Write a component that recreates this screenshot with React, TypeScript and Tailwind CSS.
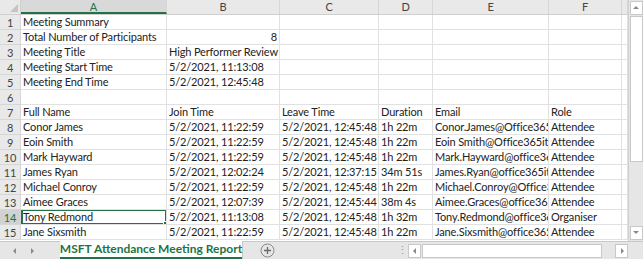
import React from 'react';

const cols = ['A', 'B', 'C', 'D', 'E', 'F', ''];
const widths = ['w-[146px]', 'w-[113px]', 'w-[99px]', 'w-[54px]', 'w-[116px]', 'w-[73px]', 'w-[6px]'];

type Row = { cells: string[]; right?: number[] };

const rows: Row[] = [
  { cells: ['Meeting Summary'] },
  { cells: ['Total Number of Participants', '8'], right: [1] },
  { cells: ['Meeting Title', 'High Performer Review'] },
  { cells: ['Meeting Start Time', '5/2/2021, 11:13:08'] },
  { cells: ['Meeting End Time', '5/2/2021, 12:45:48'] },
  { cells: [] },
  { cells: ['Full Name', 'Join Time', 'Leave Time', 'Duration', 'Email', 'Role'] },
  { cells: ['Conor James', '5/2/2021, 11:22:59', '5/2/2021, 12:45:48', '1h 22m', 'Conor.James@Office365itpros.com', 'Attendee'] },
  { cells: ['Eoin Smith', '5/2/2021, 11:22:59', '5/2/2021, 12:45:48', '1h 22m', 'Eoin Smith@Office365itpros.com', 'Attendee'] },
  { cells: ['Mark Hayward', '5/2/2021, 11:22:59', '5/2/2021, 12:45:48', '1h 22m', 'Mark.Hayward@office365itpros.com', 'Attendee'] },
  { cells: ['James Ryan', '5/2/2021, 12:02:24', '5/2/2021, 12:37:15', '34m 51s', 'James.Ryan@office365itpros.com', 'Attendee'] },
  { cells: ['Michael Conroy', '5/2/2021, 11:22:59', '5/2/2021, 12:45:48', '1h 22m', 'Michael.Conroy@Office365itpros.com', 'Attendee'] },
  { cells: ['Aimee Graces', '5/2/2021, 12:07:39', '5/2/2021, 12:45:44', '38m 4s', 'Aimee.Graces@office365itpros.com', 'Attendee'] },
  { cells: ['Tony Redmond', '5/2/2021, 11:13:08', '5/2/2021, 12:45:48', '1h 32m', 'Tony.Redmond@office365itpros.com', 'Organiser'] },
  { cells: ['Jane Sixsmith', '5/2/2021, 11:22:59', '5/2/2021, 12:45:48', '1h 22m', 'Jane.Sixsmith@office365itpros.com', 'Attendee'] },
];

const Arrow = ({ dir }: { dir: 'up' | 'down' | 'left' | 'right' }) => {
  const pts = {
    up: '1,5 4,2 7,5',
    down: '1,2 4,5 7,2',
    left: '5,1 2,4 5,7',
    right: '3,1 6,4 3,7',
  }[dir];
  return (
    <svg width="8" height="8" viewBox="0 0 8 8">
      <polygon points={pts} fill="#8a8a8a" />
    </svg>
  );
};

export default function App() {
  return (
    <div className="w-[643px] h-[259px] bg-white overflow-hidden flex flex-col text-[11px] tracking-[-0.15px] text-[#222]" style={{ fontFamily: 'Lato, "Liberation Sans", sans-serif' }}>
      <div className="flex h-[241px]">
        {/* sheet grid */}
        <div className="flex flex-col w-[628px]">
          <div className="flex h-[15px] bg-[#e9e9e9] border-b border-[#cfcfcf]">
            <div className="w-[21px] shrink-0 border-r border-[#cfcfcf] relative">
              <svg className="absolute right-[2px] bottom-[2px]" width="8" height="8" viewBox="0 0 8 8">
                <polygon points="8,0 8,8 0,8" fill="#c4c4c4" />
              </svg>
            </div>
            {cols.map((c, i) => (
              <div
                key={i}
                className={`${widths[i]} shrink-0 border-r border-[#d6d6d6] text-center leading-[14px] ${
                  i === 0 ? 'bg-[#d9d9d9] text-[#217346] border-b-2 border-b-[#217346]' : 'text-[#444]'
                }`}
              >
                {c}
              </div>
            ))}
          </div>
          {rows.map((r, ri) => (
            <div key={ri} className="flex h-[15px]">
              <div
                className={`w-[21px] shrink-0 text-center leading-[15px] border-r border-b border-[#d6d6d6] ${
                  ri === 13 ? 'bg-[#d2d2d2] text-[#217346]' : 'bg-[#e9e9e9] text-[#444]'
                }`}
              >
                {ri + 1}
              </div>
              {cols.map((_, ci) => {
                const sel = ri === 13 && ci === 0;
                return (
                  <div
                    key={ci}
                    className={`${widths[ci]} shrink-0 relative border-r border-b border-[#e1e1e1] leading-[14px] px-[2px] overflow-hidden whitespace-nowrap ${
                      r.right?.includes(ci) ? 'text-right' : ''
                    }`}
                  >
                    {r.cells[ci] ?? ''}
                    {sel && (
                      <>
                        <div className="absolute left-0 top-[-1px] right-[-1px] bottom-[-1px] border-2 border-[#217346]" />
                        <div className="absolute right-[-2px] bottom-[-2px] w-[5px] h-[5px] bg-[#217346] border border-white" />
                      </>
                    )}
                  </div>
                );
              })}
            </div>
          ))}
        </div>
        {/* vertical scrollbar */}
        <div className="w-[15px] bg-[#e6e6e6] border-l border-[#d0d0d0] flex flex-col items-center pt-[1px]">
          <div className="w-[13px] h-[14px] bg-white border border-[#c8c8c8] flex items-center justify-center">
            <Arrow dir="up" />
          </div>
          <div className="w-[13px] h-[146px] bg-white border border-[#c8c8c8] mt-[1px]" />
          <div className="flex-1" />
          <div className="w-[13px] h-[14px] bg-white border border-[#c8c8c8] mb-[1px] flex items-center justify-center">
            <Arrow dir="down" />
          </div>
        </div>
      </div>
      {/* tab bar */}
      <div className="flex-1 flex items-stretch bg-[#e6e6e6] border-t border-[#c8c8c8]">
        <div className="w-[60px] flex items-center gap-[9px] pl-[11px]">
          <Arrow dir="left" />
          <Arrow dir="right" />
        </div>
        <div className="w-[182px] bg-white -mt-[1px] flex items-center justify-center border-b-2 border-[#217346] shadow-[1px_0_0_#c8c8c8]">
          <span className="text-[#217346] font-bold text-[12px] tracking-normal leading-none whitespace-nowrap">MSFT Attendance Meeting Report</span>
        </div>
        <div className="w-[50px] flex items-center justify-center">
          <svg width="15" height="15" viewBox="0 0 15 15">
            <circle cx="7.5" cy="7.5" r="6.5" fill="none" stroke="#8a8a8a" strokeWidth="1" />
            <path d="M7.5 4v7M4 7.5h7" stroke="#6a6a6a" strokeWidth="1.3" />
          </svg>
        </div>
        <div className="flex-1" />
        <div className="w-[12px] flex items-center justify-center text-[#9a9a9a] text-[11px]">⋮</div>
        <div className="w-[235px] flex items-center pr-[15px]">
          <div className="w-[13px] h-[14px] bg-white border border-[#c8c8c8] flex items-center justify-center">
            <Arrow dir="left" />
          </div>
          <div className="w-[180px] h-[14px] bg-white border border-[#c8c8c8] ml-[1px]" />
          <div className="flex-1" />
          <div className="w-[13px] h-[14px] bg-white border border-[#c8c8c8] flex items-center justify-center">
            <Arrow dir="right" />
          </div>
        </div>
      </div>
    </div>
  );
}
